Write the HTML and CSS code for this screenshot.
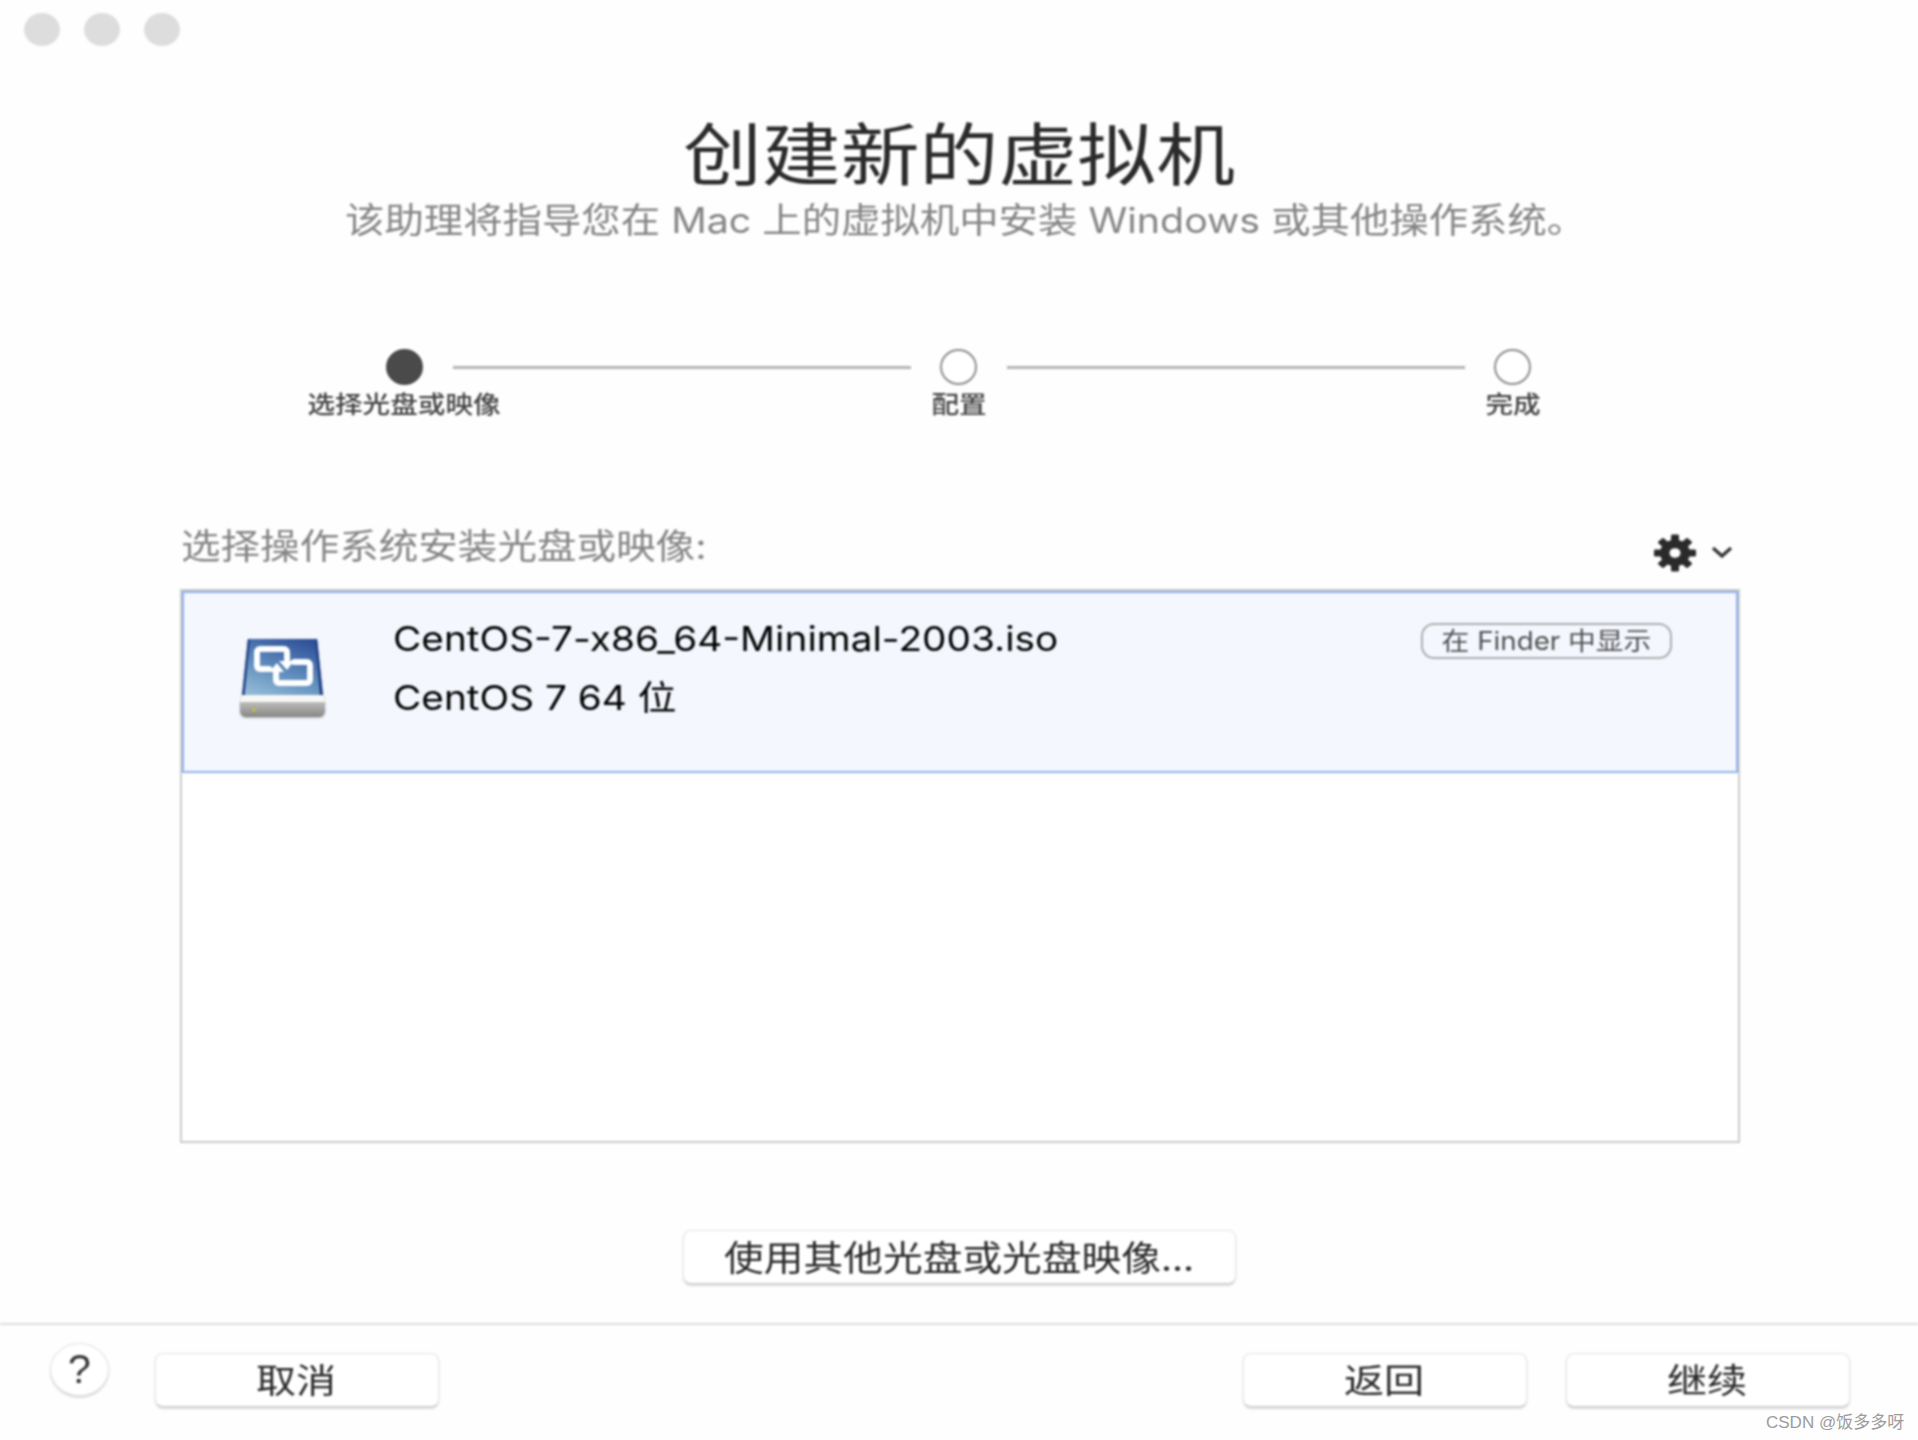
FILE: index.html
```html
<!DOCTYPE html>
<html lang="zh-CN">
<head>
<meta charset="utf-8">
<title>创建新的虚拟机</title>
<link rel="stylesheet" href="styles.css">
</head>
<body>
<div class="app">
  <div class="main">
    <div class="traffic"><span class="light"></span><span class="light"></span><span class="light"></span></div>
    <h1 class="title"><span class="sx">创建新的虚拟机</span></h1>
    <p class="subtitle"><span class="sx">该助理将指导您在 Mac 上的虚拟机中安装 Windows 或其他操作系统。</span></p>
    <div class="track">
      <span class="node node-on"></span><span class="line"></span><span class="node"></span><span class="line"></span><span class="node"></span>
    </div>
    <div class="labels">
      <span class="label"><span class="sx">选择光盘或映像</span></span><span class="label"><span class="sx">配置</span></span><span class="label"><span class="sx">完成</span></span>
    </div>
    <div class="section-head">
      <span class="section-title sx sx-left">选择操作系统安装光盘或映像:</span>
      <span class="tools">
        <svg class="gear" viewBox="0 0 44 40">
          <g transform="translate(22 20) scale(1 .88)" fill="#2a2a2a">
            <circle r="15"/>
            <rect x="-4" y="-21" width="8" height="42" rx="1.5"/>
            <rect x="-4" y="-21" width="8" height="42" rx="1.5" transform="rotate(45)"/>
            <rect x="-4" y="-21" width="8" height="42" rx="1.5" transform="rotate(90)"/>
            <rect x="-4" y="-21" width="8" height="42" rx="1.5" transform="rotate(135)"/>
            <circle r="5.5" fill="#fefefe"/>
          </g>
        </svg>
        <svg class="chevron" viewBox="0 0 22 13"><path d="M2 2l9 8 9-8" fill="none" stroke="#333" stroke-width="3.2"/></svg>
      </span>
    </div>
    <div class="list">
      <div class="row">
        <svg class="disk" viewBox="0 0 85 80">
          <defs>
            <linearGradient id="face" x1="0.75" y1="0" x2="0.25" y2="1"><stop offset="0" stop-color="#2f5199"/><stop offset="0.55" stop-color="#5f8cbd"/><stop offset="1" stop-color="#8fb9d4"/></linearGradient>
            <linearGradient id="base" x1="0" y1="0" x2="0" y2="1"><stop offset="0" stop-color="#bdbdbb"/><stop offset="1" stop-color="#868684"/></linearGradient>
          </defs>
          <path d="M8 1h69l6 57H2z" fill="url(#face)"/>
          <path d="M8 1L2 58h2.500L10 1zM77 1l6 57h-3L75 1z" fill="#1f3f86"/>
          <path d="M2 57h81l2 8H0z" fill="#f7f7f5"/>
          <path d="M0 64h85v9a6 6 0 0 1-6 6H6a6 6 0 0 1-6-6z" fill="url(#base)"/>
          <circle cx="14" cy="72" r="1.900" fill="#c2c03f"/>
          <g fill="none" stroke="#fff" stroke-width="6" stroke-linejoin="round" stroke-linecap="round">
            <path d="M29 31h-9a3 3 0 0 1-3-3V14a3 3 0 0 1 3-3h24a3 3 0 0 1 3 3v9"/>
            <path d="M54 24h13a3 3 0 0 1 3 3v15a3 3 0 0 1-3 3H39a3 3 0 0 1-3-3v-8"/>
          </g>
          <path d="M39 23h15l-7 9zM29 34h15l-7-9z" fill="#fff"/>
        </svg>
        <div class="names">
          <div class="name"><span class="sx sx-left">CentOS-7-x86_64-Minimal-2003.iso</span></div>
          <div class="name"><span class="sx sx-left">CentOS 7 64 位</span></div>
        </div>
        <button class="finder"><span class="sx">在 Finder 中显示</span></button>
      </div>
    </div>
    <div class="other"><button class="btn btn-other"><span class="sx">使用其他光盘或光盘映像...</span></button></div>
  </div>
  <div class="footer">
    <button class="help">?</button>
    <button class="btn btn-foot"><span class="sx">取消</span></button>
    <span class="spacer"></span>
    <button class="btn btn-foot btn-back"><span class="sx">返回</span></button>
    <button class="btn btn-foot"><span class="sx">继续</span></button>
  </div>
</div>
<span class="mark">CSDN @饭多多呀</span>
</body>
</html>
```
FILE: styles.css
```css
* { box-sizing: border-box; }
html, body { margin: 0; height: 1440px; overflow: hidden; background: #fefefe; }
body { font-family: "Inter", "Noto Sans CJK SC", sans-serif; position: relative; }
.app { width: 1918px; height: 1440px; display: flex; flex-direction: column; filter: blur(0.9px); }
.sx { display: inline-block; transform: scaleX(1.15); white-space: nowrap; }
.sx-left { transform-origin: left center; }
.main { height: 1325px; display: flex; flex-direction: column; border-bottom: 2px solid #dedede; flex: none; }
.traffic { display: flex; gap: 24px; padding: 13px 0 0 24px; height: 115px; flex: none; }
.light { width: 36px; height: 33px; border-radius: 50%; background: #dcdddc; }
.title { margin: 0; height: 80px; padding-bottom: 8px; line-height: 72px; font-size: 68px; font-weight: 400; text-align: center; color: #2b2b2b; font-family: "Noto Sans CJK SC", sans-serif; flex: none; }
.title .sx { transform: scaleX(1.16); }
.subtitle { margin: 0; height: 50px; padding-left: 13px; line-height: 50px; font-size: 35px; text-align: center; color: #858585; flex: none; }
.subtitle .sx { transform: scaleX(1.125); }
.track { display: flex; align-items: center; gap: 29.5px; margin-top: 104px; padding-left: 386px; height: 36px; flex: none; }
.node { width: 37px; height: 36px; border-radius: 50%; border: 2px solid #8d8d8d; background: #fff; flex: none; }
.node-on { background: #4a4a4a; border-color: #4a4a4a; }
.line { width: 458px; height: 3px; background: #b4b4b4; flex: none; }
.labels { display: flex; gap: 354.5px; padding-left: 304px; height: 40px; flex: none; }
.label { width: 200px; line-height: 40px; font-size: 24px; font-weight: 500; text-align: center; color: #444; }
.section-head { display: flex; justify-content: space-between; align-items: center; margin: 0 178px 0 181px; padding-top: 78px; height: 164px; flex: none; }
.section-title { font-size: 35px; line-height: 50px; color: #858585; transform: scaleX(1.13); }
.tools { display: flex; align-items: center; gap: 14px; margin-right: 7px; margin-top: 13px; }
.gear { width: 44px; height: 40px; display: block; }
.chevron { width: 22px; height: 13px; display: block; }
.list { margin: 0 178px 0 180px; height: 554px; border: 2px solid #cbcbcb; flex: none; background: #fff; }
.row { height: 182px; display: flex; align-items: flex-start; background: #f4f7fe; border: 2px solid #8fb1ee; position: relative; padding: 45px 0 0 56px; }
.disk { width: 85px; height: 80px; flex: none; filter: drop-shadow(0 1px 1px rgba(0,0,0,0.25)); }
.names { margin-left: 68px; margin-top: -29px; flex: 1; }
.name { font-size: 34px; line-height: 59px; color: #000; }
.name .sx { transform: scaleX(1.14); }
.finder { margin: -15px 64px 0 0; width: 251px; height: 36px; border: 2px solid #adadad; border-radius: 13px; background: transparent; font: 400 25px/30px "Inter", "Noto Sans CJK SC", sans-serif; color: #505050; padding: 0; white-space: nowrap; }
.finder .sx { transform: scaleX(1.11); }
.other { display: flex; justify-content: center; margin-top: 87px; flex: none; }
.btn { background: #fff; border: 1px solid #e4e4e4; border-bottom-color: #c8c8c8; border-radius: 8px; box-shadow: 0 2px 2px rgba(0,0,0,0.14); color: #2a2a2a; padding: 0; font-family: "Noto Sans CJK SC", sans-serif; white-space: nowrap; }
.btn-other { width: 553px; height: 54px; font-size: 35px; line-height: 48px; padding-bottom: 2px; }
.btn-other .sx { transform: scaleX(1.135); }
.footer { flex: 1; display: flex; align-items: flex-start; padding: 28px 68px 0 50px; }
.help { width: 59px; height: 53px; margin: -10px 46px 0 0; border-radius: 50%; background: #fff; border: 1px solid #e2e2e2; box-shadow: 0 2px 2px rgba(0,0,0,0.14); font: 400 41px/44px "Liberation Sans", sans-serif; color: #333; padding: 0 0 2px; }
.btn-foot { width: 284px; height: 54px; font-size: 34px; line-height: 47px; padding: 0 2px 4px 0; }
.btn-foot .sx { transform: scaleX(1.18); }
.btn-back { margin-right: 39px; }
.spacer { flex: 1; }
.mark { position: absolute; left: 1766px; top: 1412px; font: 400 17px/22px "Liberation Sans", "Noto Sans CJK SC", sans-serif; color: #9c9c9c; white-space: nowrap; }
```
